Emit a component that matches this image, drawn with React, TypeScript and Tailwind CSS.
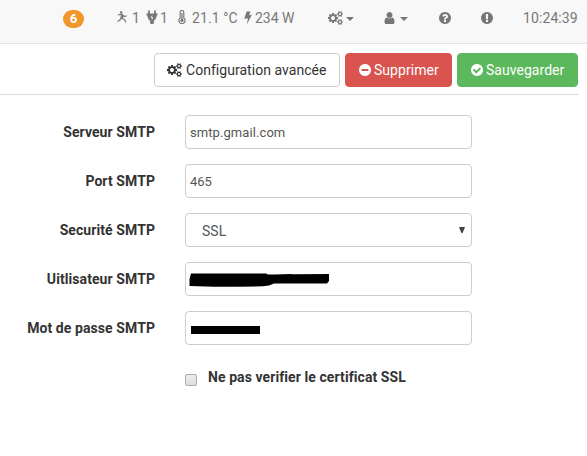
import type { ReactNode } from 'react';

const DISC = 'M1664 896q0 209-103 385.5t-279.5 279.5-385.5 103-385.5-103-279.5-279.5-103-385.5 103-385.5 279.5-279.5 385.5-103 385.5 103 279.5 279.5 103 385.5z';

const PATHS = {
  cogs:
    'M896 896q0-106-75-181t-181-75-181 75-75 181 75 181 181 75 181-75 75-181zm768 512q0-52-38-90t-90-38-90 38-38 90q0 53 37.5 90.5t90.5 37.5 90.5-37.5 37.5-90.5zm0-1024q0-52-38-90t-90-38-90 38-38 90q0 53 37.5 90.5t90.5 37.5 90.5-37.5 37.5-90.5zm-384 421v185q0 10-7 19.5t-16 10.5l-155 24q-11 35-32 76 34 48 90 115 7 11 7 20 0 12-7 19-23 30-82.5 89.5t-78.5 59.5q-11 0-21-7l-115-90q-37 19-77 31-11 108-23 155-7 24-30 24h-186q-11 0-20-7.5t-10-17.5l-23-153q-34-10-75-31l-118 89q-7 7-20 7-11 0-21-8-144-133-144-160 0-9 7-19 10-14 41-53t47-61q-23-44-35-82l-152-24q-10-1-17-9.5t-7-19.5v-185q0-10 7-19.5t16-10.5l155-24q11-35 32-76-34-48-90-115-7-11-7-20 0-12 7-20 22-30 82-89t79-59q11 0 21 7l115 90q34-18 77-32 11-108 23-154 7-24 30-24h186q11 0 20 7.5t10 17.5l23 153q34 10 75 31l118-89q8-7 20-7 11 0 21 8 144 133 144 160 0 8-7 19-12 16-42 54t-45 60q23 48 34 82l152 23q10 2 17 10.5t7 19.5zm640 533v140q0 16-149 31-12 27-30 52 51 113 51 138 0 4-4 7-122 71-124 71-8 0-46-47t-52-68q-20 2-30 2t-30-2q-14 21-52 68t-46 47q-2 0-124-71-4-3-4-7 0-25 51-138-18-25-30-52-149-15-149-31v-140q0-16 149-31 13-29 30-52-51-113-51-138 0-4 4-7 4-2 35-20t59-34 30-16q8 0 46 46.5t52 67.5q20-2 30-2t30 2q51-71 92-112l6-2q4 0 124 70 4 3 4 7 0 25-51 138 17 23 30 52 149 15 149 31zm0-1024v140q0 16-149 31-12 27-30 52 51 113 51 138 0 4-4 7-122 71-124 71-8 0-46-47t-52-68q-20 2-30 2t-30-2q-14 21-52 68t-46 47q-2 0-124-71-4-3-4-7 0-25 51-138-18-25-30-52-149-15-149-31v-140q0-16 149-31 13-29 30-52-51-113-51-138 0-4 4-7 4-2 35-20t59-34 30-16q8 0 46 46.5t52 67.5q20-2 30-2t30 2q51-71 92-112l6-2q4 0 124 70 4 3 4 7 0 25-51 138 17 23 30 52 149 15 149 31z',
  user:
    'M1536 1399q0 109-62.5 187t-150.5 78h-854q-88 0-150.5-78t-62.5-187q0-85 8.5-160.5t31.5-152 58.5-131 94-89 134.5-34.5q131 128 313 128t313-128q76 0 134.5 34.5t94 89 58.5 131 31.5 152 8.5 160.5zm-256-887q0 159-112.5 271.5t-271.5 112.5-271.5-112.5-112.5-271.5 112.5-271.5 271.5-112.5 271.5 112.5 112.5 271.5z',
  check:
    'M1412 734q0-28-18-46l-91-90q-19-19-45-19t-45 19l-408 407-226-226q-19-19-45-19t-45 19l-91 90q-18 18-18 46 0 27 18 45l362 362q19 19 45 19 27 0 46-19l543-543q18-18 18-45z' + DISC,
  minus:
    'M1344 960v-128q0-26-19-45t-45-19h-768q-26 0-45 19t-19 45v128q0 26 19 45t45 19h768q26 0 45-19t19-45z' + DISC,
  question:
    'M1024 1376v-192q0-14-9-23t-23-9h-192q-14 0-23 9t-9 23v192q0 14 9 23t23 9h192q14 0 23-9t9-23zm256-672q0-88-55.5-163t-138.5-116-170-41q-243 0-371 213-15 24 8 42l132 100q7 6 19 6 16 0 25-12 53-68 86-92 34-24 86-24 48 0 85.5 26t37.5 59q0 38-20 61t-68 45q-63 28-115.5 86.5t-52.5 125.5v36q0 14 9 23t23 9h192q14 0 23-9t9-23q0-19 21.5-49.5t54.5-49.5q32-18 49-28.5t46-35 44.5-48 28-60.5 12.5-81z' + DISC,
  exclamation:
    'M896 128q209 0 385.5 103t279.5 279.5 103 385.5-103 385.5-279.5 279.5-385.5 103-385.5-103-279.5-279.5-103-385.5 103-385.5 279.5-279.5 385.5-103zm128 1247v-190q0-14-9-23.5t-22-9.5h-192q-13 0-23 10t-10 23v190q0 13 10 23t23 10h192q13 0 22-9.5t9-23.5zm-2-344l18-621q0-12-10-18-10-8-24-8h-220q-14 0-24 8-10 6-10 18l17 621q0 10 10 17.5t24 7.5h185q14 0 23.5-7.5t10.5-17.5z',
};

function Glyph({ name, className = 'size-3.5' }: { name: keyof typeof PATHS; className?: string }) {
  return (
    <svg viewBox={name === 'cogs' ? '0 0 1920 1792' : '0 0 1792 1792'} fill="currentColor" fillRule="evenodd" className={`shrink-0 ${className}`}>
      <path d={PATHS[name]} />
    </svg>
  );
}

function Caret() {
  return <span className="mt-px h-0 w-0 border-x-4 border-t-4 border-x-transparent border-t-current" />;
}

function Header() {
  return (
    <header className="flex h-11 items-center border-b border-[#e3e3e3] bg-[#f8f8f8] pb-[7px] pl-[63px] text-sm text-[#777]">
      <span className="mt-0.5 flex h-[18px] w-[21px] items-center justify-center rounded-full bg-[#f0962a] text-[13px] font-bold text-white">6</span>
      <div className="flex w-[212px] items-center pl-[33px]">
        <svg viewBox="0 0 12 13" fill="none" stroke="currentColor" strokeWidth="1.3" className="mb-[3px] h-3 w-[11px] shrink-0">
          <circle cx="4.6" cy="1.5" r="1.4" fill="currentColor" stroke="none" />
          <path d="M1 4.6 3 3.6 6 4.2 4.9 7.5 3.4 9.6.6 11.4M6 4.2 8 6l2.6-.9M4.9 7.5l3 1.6 2 3.2" />
          <path d="m5 3.8-1 4 1.9.5 1-3.4z" fill="currentColor" strokeWidth=".8" />
        </svg>
        <span className="w-[18px] pl-1">1</span>
        <svg viewBox="0 0 12 14" fill="none" stroke="currentColor" className="mb-0.5 h-3.5 w-3 shrink-0">
          <path d="M3 .5v4M9 .5v4M.5 4.3h11" strokeWidth="1.8" />
          <path d="M1.5 4.5h9L9.4 8.8 7.3 11v2.5H4.7V11L2.6 8.8z" fill="currentColor" />
          <path d="M6.3 5.6 4.9 7.6h2L5.9 9.6" stroke="#f8f8f8" strokeWidth=".8" />
        </svg>
        <span className="w-[20px] pl-0.5">1</span>
        <svg viewBox="0 0 8 14" fill="none" stroke="currentColor" className="mb-[3px] h-3.5 w-2 shrink-0">
          <path d="M2.2 8V2.3a1.8 1.8 0 0 1 3.6 0V8a3.1 3.1 0 1 1-3.6 0Z" strokeWidth="1.2" />
          <path d="M4 3v7" strokeWidth="1.2" />
          <circle cx="4" cy="10.4" r="1.6" fill="currentColor" stroke="none" />
        </svg>
        <span className="w-[58px] pl-1.5 tracking-[0.1px] whitespace-nowrap">21.1 °C</span>
        <svg viewBox="0 0 8 14" fill="currentColor" className="h-3.5 w-2 shrink-0">
          <path d="M2.6.6h3.9L5.1 4.3 7.9 3.7 2.8 13.5 4 7.2.3 8z" />
        </svg>
        <span className="pl-[3px] whitespace-nowrap">234 W</span>
      </div>
      <div className="flex w-[55px] items-center gap-[3px] pl-8">
        <Glyph name="cogs" className="h-3.5 w-[15px]" />
        <Caret />
      </div>
      <div className="flex w-[85px] items-center gap-[3px] pl-[31px]">
        <Glyph name="user" className="h-3.5 w-[15px]" />
        <Caret />
      </div>
      <Glyph name="question" className="ml-0.5 size-3.5" />
      <Glyph name="exclamation" className="ml-[28px] size-3.5" />
      <span className="ml-[29px] tracking-[0.1px]">10:24:39</span>
    </header>
  );
}

function Button({ className, children }: { className: string; children: ReactNode }) {
  return (
    <button className={`flex h-[34px] items-center gap-[3px] rounded-[4px] border pl-3 tracking-[0.04px] whitespace-nowrap ${className}`}>
      {children}
    </button>
  );
}

const INPUT = 'flex h-[34px] w-[287px] items-center rounded-[4px] border border-[#ccc] bg-white text-[#555]';

function Row({ label, children }: { label: string; children: ReactNode }) {
  return (
    <div className="flex h-[34px] gap-[30px]">
      <label className="w-[155px] pt-[7px] text-right text-sm leading-5 font-bold tracking-[0.08px] whitespace-nowrap">{label}</label>
      <div className={INPUT}>{children}</div>
    </div>
  );
}

export default function App() {
  return (
    <div className="h-[456px] w-[587px] overflow-hidden bg-white font-['Roboto',sans-serif] text-sm text-[#333]">
      <Header />
      <div className="flex h-[51px] w-[579px] justify-end gap-[5px] border-b border-[#ddd] pt-[9px] pr-px">
        <Button className="w-[186px] border-[#ccc] bg-white">
          <Glyph name="cogs" className="mr-px h-3.5 w-[15px]" />
          Configuration avancée
        </Button>
        <Button className="w-[107px] border-[#d9534f] bg-[#d9534f] text-white">
          <Glyph name="minus" className="-mr-px size-3.5" />
          Supprimer
        </Button>
        <Button className="w-[121px] border-[#5cb85c] bg-[#5cb85c] text-white">
          <Glyph name="check" className="-mr-px size-3.5" />
          Sauvegarder
        </Button>
      </div>
      <form className="flex flex-col gap-[15px] pt-5">
        <Row label="Serveur SMTP">
          <span className="pt-0.5 pl-1 text-[13px] tracking-[0.08px]">smtp.gmail.com</span>
        </Row>
        <Row label="Port SMTP">
          <span className="pt-0.5 pl-1 text-[13px]">465</span>
        </Row>
        <Row label="Securité SMTP">
          <span className="grow pt-px pl-4">SSL</span>
          <svg viewBox="0 0 6 6" className="mr-1.5 size-1.5" fill="#444">
            <path d="M0 0h6L3.6 6H2.4z" />
          </svg>
        </Row>
        <Row label="Uitlisateur SMTP">
          <svg viewBox="0 0 140 14" className="mt-0.5 ml-[3px] h-3.5 w-[140px]">
            <path d="M2 .5h75l2 1h7l15-.5 3 .3 36-.2v7l-2 2.5H85l-5 2-6 .7-24 .4H25L.5 13V6z" />
          </svg>
        </Row>
        <Row label="Mot de passe SMTP">
          <span className="mt-[3px] ml-[5px] h-2 w-[69px] bg-black" />
        </Row>
        <div className="flex h-[34px] pl-[185px]">
          <span className="mt-[14px] size-3 rounded-[2px] border border-[#aaa] bg-linear-to-b from-[#eee] to-[#ddd]" />
          <label className="pt-[7px] pl-[11px] leading-5 font-bold tracking-[0.08px] whitespace-nowrap">Ne pas verifier le certificat SSL</label>
        </div>
      </form>
    </div>
  );
}
